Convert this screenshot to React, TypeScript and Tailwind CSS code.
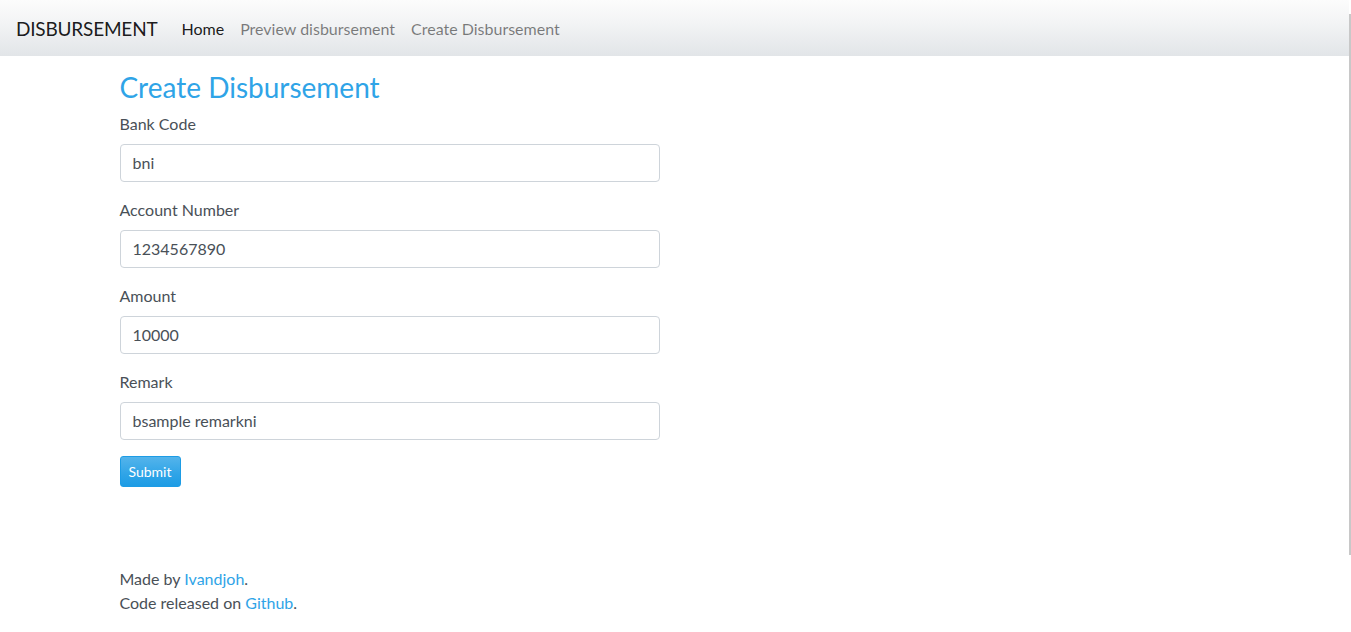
import React from "react";

const fields = [
  { label: "Bank Code", value: "bni" },
  { label: "Account Number", value: "1234567890" },
  { label: "Amount", value: "10000" },
  { label: "Remark", value: "bsample remarkni" },
];

export default function App() {
  return (
    <div
      className="min-h-[632px] w-[1349px] bg-white text-[#495057] text-[16px] leading-[24px] relative"
      style={{ fontFamily: 'Lato, "Noto Sans", sans-serif' }}
    >
      <nav className="h-[56px] flex items-center pt-[1px] px-4 bg-[linear-gradient(#fcfcfc,#f3f4f5_40%,#e2e5e8)]">
        <span className="text-[19px] text-black/90 mr-4 leading-[30px] tracking-[-0.2px]">DISBURSEMENT</span>
        <div className="flex items-center">
          <a className="px-2 text-black/90">Home</a>
          <a className="px-2 text-black/50">Preview disbursement</a>
          <a className="px-2 text-black/50">Create Disbursement</a>
        </div>
      </nav>
      <div className="max-w-[1140px] mx-auto px-[15px] pt-[14px]">
        <h3 className="text-[28px] leading-[34px] text-[#2fa4e7] mb-2">Create Disbursement</h3>
        <form className="w-[540px]">
          {fields.map((f) => (
            <div key={f.label} className="mb-4">
              <label className="block mb-2">{f.label}</label>
              <input
                readOnly
                value={f.value}
                className="block w-full h-[38px] px-3 pb-[2px] border border-[#ced4da] rounded-[4px] text-[#495057] outline-none"
              />
            </div>
          ))}
          <button
            type="button"
            className="h-[31px] px-2 text-[14px] leading-[21px] text-white rounded-[3px] bg-[linear-gradient(#54b4eb,#2fa4e7_60%,#1d9ce5)] border border-[#1d9ce5]"
          >
            Submit
          </button>
        </form>
        <footer className="mt-[80px]">
          <div>
            Made by <a className="text-[#2fa4e7]">Ivandjoh</a>.
          </div>
          <div>
            Code released on <a className="text-[#2fa4e7]">Github</a>.
          </div>
        </footer>
      </div>
      <div className="absolute right-[-2px] top-[14px] h-[541px] w-[2px] bg-[#c8c8c8]" />
    </div>
  );
}
